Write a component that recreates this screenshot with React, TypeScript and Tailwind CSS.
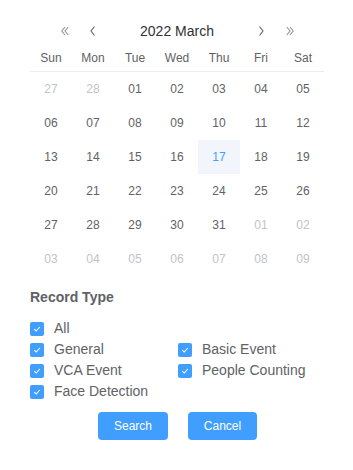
import { useState } from 'react'

const weekDays = ['Sun', 'Mon', 'Tue', 'Wed', 'Thu', 'Fri', 'Sat']

type Day = { label: string; current: boolean }

function buildDays(): Day[] {
  const days: Day[] = []
  days.push({ label: '27', current: false }, { label: '28', current: false })
  for (let d = 1; d <= 31; d++) days.push({ label: String(d).padStart(2, '0'), current: true })
  let n = 1
  while (days.length < 42) {
    days.push({ label: String(n).padStart(2, '0'), current: false })
    n++
  }
  return days
}

const recordTypes = [
  ['All'],
  ['General', 'Basic Event'],
  ['VCA Event', 'People Counting'],
  ['Face Detection'],
]

function Chevron({ dir, double }: { dir: 'left' | 'right'; double?: boolean }) {
  const flip = dir === 'right' ? 'scale(-1,1) translate(-12,0)' : undefined
  return (
    <svg width="12" height="12" viewBox="0 0 12 12" fill="none" stroke="currentColor" strokeWidth={1.1}>
      <g transform={flip}>
        {double ? (
          <>
            <path d="M5 2 L1.8 6 L5 10" />
            <path d="M8.2 2 L5 6 L8.2 10" />
          </>
        ) : (
          <path d="M7.5 1.5 L4 6 L7.5 10.5" />
        )}
      </g>
    </svg>
  )
}

function CheckBox({ label }: { label: string }) {
  const [checked, setChecked] = useState(true)
  return (
    <label className="flex items-center h-[21px] cursor-pointer" onClick={() => setChecked(!checked)}>
      <span className={`w-[14px] h-[14px] rounded-[2px] flex items-center justify-center ${checked ? 'bg-[#409eff]' : 'border border-[#dcdfe6] bg-white'}`}>
        {checked && (
          <svg width="10" height="10" viewBox="0 0 10 10" fill="none" stroke="white" strokeWidth={1.1}>
            <path d="M2.2 5.2 L4.2 7 L7.8 3" />
          </svg>
        )}
      </span>
      <span className="ml-[10px] text-[14px] text-[#606266]">{label}</span>
    </label>
  )
}

export default function App() {
  const days = buildDays()
  return (
    <div className="w-[353px] h-[470px] bg-white pl-[30px] pt-[17px]" style={{ fontFamily: '"Liberation Sans", Arial, sans-serif' }}>
      {/* Calendar */}
      <div className="w-[294px]">
        <div className="flex items-center h-[28px] pl-[30px] pr-[29px]">
          <button className="text-[#909399] w-[12px] flex justify-center"><Chevron dir="left" double /></button>
          <button className="text-[#606266] w-[12px] ml-[15px] flex justify-center"><Chevron dir="left" /></button>
          <div className="flex-1 text-center text-[14px] text-[#303133]">2022 March</div>
          <button className="text-[#606266] w-[12px] flex justify-center"><Chevron dir="right" /></button>
          <button className="text-[#909399] w-[12px] ml-[16px] flex justify-center"><Chevron dir="right" double /></button>
        </div>
        <div className="grid grid-cols-7 h-[27px] border-b border-[#ebeef5]">
          {weekDays.map(w => (
            <div key={w} className="flex items-center justify-center text-[12px] text-[#606266]">{w}</div>
          ))}
        </div>
        <div className="grid grid-cols-7">
          {days.map((d, i) => {
            const selected = d.current && d.label === '17'
            return (
              <div
                key={i}
                className={`h-[34px] flex items-center justify-center text-[12px] ${selected ? 'bg-[#f2f6fc] text-[#409eff]' : d.current ? 'text-[#606266]' : 'text-[#c0c4cc]'}`}
              >
                {d.label}
              </div>
            )
          })}
        </div>
      </div>

      {/* Record type */}
      <div className="mt-[12px] text-[14px] font-bold text-[#606266] leading-[18px]">Record Type</div>
      <div className="mt-[12px]">
        {recordTypes.map((row, i) => (
          <div key={i} className="flex">
            {row.map(label => (
              <div key={label} className="w-[148px]">
                <CheckBox label={label} />
              </div>
            ))}
          </div>
        ))}
      </div>

      <div className="flex gap-[20px] mt-[10px] ml-[68px]">
        <button className="w-[70px] h-[28px] rounded-[4px] bg-[#409eff] text-white text-[12px]">Search</button>
        <button className="w-[69px] h-[28px] rounded-[4px] bg-[#409eff] text-white text-[12px]">Cancel</button>
      </div>
    </div>
  )
}
